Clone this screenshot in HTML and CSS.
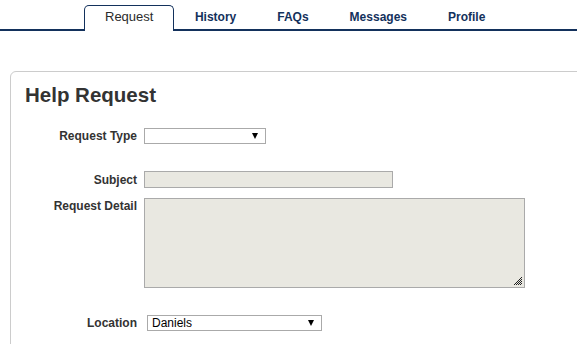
FILE: index.html
```html
<!DOCTYPE html>
<html lang="en">

<head>
  <meta charset="UTF-8">
  <meta name="viewport" content="width=device-width, initial-scale=1.0">
  <title>Help Request</title>
  <link rel="stylesheet" href="styles.css">
</head>

<body>
  <ul class="tabs">
    <li class="tab active">Request</li>
    <li class="tab">History</li>
    <li class="tab">FAQs</li>
    <li class="tab">Messages</li>
    <li class="tab">Profile</li>
  </ul>

  <div class="panel">
    <h1>Help Request</h1>
    <form class="request-form">
      <div class="row">
        <label>Request Type</label>
        <div class="select short"><span></span></div>
      </div>
      <div class="row subject">
        <label>Subject</label>
        <input type="text" class="field">
      </div>
      <div class="row detail">
        <label>Request Detail</label>
        <div class="textarea-wrap">
          <textarea class="field"></textarea>
          <svg class="grip" width="8" height="8" viewBox="0 0 8 8">
            <rect x="7" y="0" width="1" height="1" />
            <rect x="6" y="1" width="1" height="1" />
            <rect x="5" y="2" width="1" height="1" />
            <rect x="7" y="2" width="1" height="1" />
            <rect x="4" y="3" width="1" height="1" />
            <rect x="6" y="3" width="1" height="1" />
            <rect x="3" y="4" width="1" height="1" />
            <rect x="5" y="4" width="1" height="1" />
            <rect x="7" y="4" width="1" height="1" />
            <rect x="2" y="5" width="1" height="1" />
            <rect x="4" y="5" width="1" height="1" />
            <rect x="6" y="5" width="1" height="1" />
            <rect x="1" y="6" width="1" height="1" />
            <rect x="3" y="6" width="1" height="1" />
            <rect x="5" y="6" width="1" height="1" />
            <rect x="7" y="6" width="1" height="1" />
            <rect x="0" y="7" width="1" height="1" />
            <rect x="2" y="7" width="1" height="1" />
            <rect x="4" y="7" width="1" height="1" />
            <rect x="6" y="7" width="1" height="1" />
          </svg>
        </div>
      </div>
      <div class="row location">
        <label>Location</label>
        <div class="select long"><span>Daniels</span></div>
      </div>
    </form>
  </div>
</body>

</html>
```

FILE: styles.css
```css
body {
  margin: 0;
  font-family: 'Liberation Sans', Arial, sans-serif;
  background: #fff;
  color: #333;
  overflow: hidden;
}

.tabs {
  display: flex;
  align-items: flex-end;
  list-style: none;
  margin: 0;
  padding: 5px 0 0 84px;
  border-bottom: 2px solid #13315c;
}

.tab {
  padding: 4px 19.5px 5px;
  border: 1px solid transparent;
  border-bottom: none;
  font-size: 12px;
  font-weight: bold;
  line-height: 14px;
  color: #13315c;
}

.tab.active {
  border-color: #13315c;
  border-radius: 5px 5px 0 0;
  background: #fff;
  margin-bottom: -2px;
  padding: 4px 20px 7px;
  font-size: 13px;
  font-weight: normal;
  color: #2b2b2b;
}

.panel {
  margin: 40px -20px 0 10px;
  min-height: 300px;
  border: 1px solid #ccc;
  border-radius: 6px 0 0 0;
  padding-top: 11px;
}

.panel h1 {
  margin: 0 0 21px 14px;
  font-size: 20.5px;
  line-height: 24px;
  color: #333;
}

.row {
  display: grid;
  grid-template-columns: 126px auto;
  column-gap: 7px;
  align-items: center;
  justify-items: start;
}

.row label {
  justify-self: end;
  font-size: 12px;
  font-weight: bold;
  line-height: 14px;
  color: #333;
}

.row.subject {
  margin-top: 27px;
}

.row.detail {
  margin-top: 10px;
  align-items: start;
}

.row.detail label {
  margin-top: 1px;
}

.row.location {
  margin-top: 27px;
}

.select {
  position: relative;
  box-sizing: border-box;
  height: 16px;
  border: 1px solid #aaa;
  background: #fff;
  font-size: 12px;
  line-height: 14px;
  color: #000;
  padding-left: 4px;
}

.select::after {
  content: "";
  position: absolute;
  right: 7px;
  top: 4px;
  border-left: 3.5px solid transparent;
  border-right: 3.5px solid transparent;
  border-top: 6px solid #000;
}

.select.short {
  width: 122px;
}

.select.long {
  width: 175px;
  margin-left: 3px;
}

.field {
  box-sizing: border-box;
  display: block;
  margin: 0;
  border: 1px solid #aaa;
  background: #e9e8e1;
  font-family: inherit;
  font-size: 12px;
}

input.field {
  width: 249px;
  height: 17px;
}

.textarea-wrap {
  position: relative;
}

textarea.field {
  width: 381px;
  height: 90px;
  resize: none;
}

.grip {
  position: absolute;
  right: 3px;
  bottom: 3px;
  fill: #222;
}
```
